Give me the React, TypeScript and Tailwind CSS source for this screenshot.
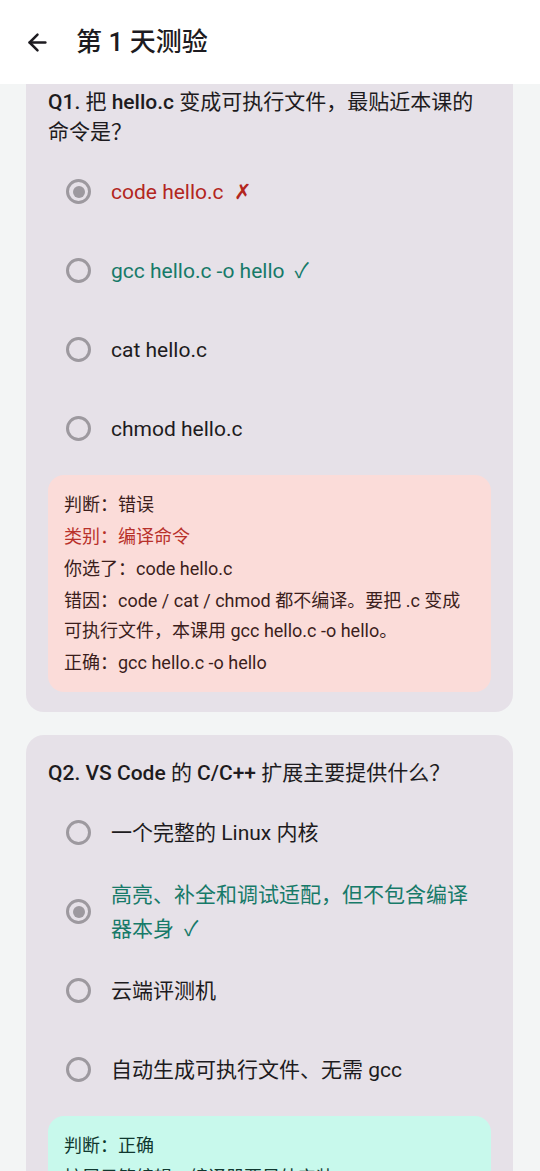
import { ArrowLeft } from 'lucide-react';

type Option = { text: string; selected?: boolean; state?: 'wrong' | 'right' };

type Question = {
  // title split into parts: latin bits are drawn medium, CJK bits regular
  title: { t: string; latin?: boolean }[];
  options: Option[];
  result: 'wrong' | 'right';
  lines: { label: string; value: string; accent?: boolean }[];
};

const questions: Question[] = [
  {
    title: [
      { t: 'Q1. ', latin: true },
      { t: '把 ' },
      { t: 'hello.c', latin: true },
      { t: ' 变成可执行文件，最贴近本课的命令是？' },
    ],
    options: [
      { text: 'code hello.c', selected: true, state: 'wrong' },
      { text: 'gcc hello.c -o hello', state: 'right' },
      { text: 'cat hello.c' },
      { text: 'chmod hello.c' },
    ],
    result: 'wrong',
    lines: [
      { label: '判断：', value: '错误' },
      { label: '类别：', value: '编译命令', accent: true },
      { label: '你选了：', value: 'code hello.c' },
      { label: '错因：', value: 'code / cat / chmod 都不编译。要把 .c 变成可执行文件，本课用 gcc hello.c -o hello。' },
      { label: '正确：', value: 'gcc hello.c -o hello' },
    ],
  },
  {
    title: [
      { t: 'Q2. VS Code ', latin: true },
      { t: '的 ' },
      { t: 'C/C++', latin: true },
      { t: ' 扩展主要提供什么？' },
    ],
    options: [
      { text: '一个完整的 Linux 内核' },
      { text: '高亮、补全和调试适配，但不包含编译器本身', selected: true, state: 'right' },
      { text: '云端评测机' },
      { text: '自动生成可执行文件、无需 gcc' },
    ],
    result: 'right',
    lines: [
      { label: '判断：', value: '正确' },
      { label: '', value: '扩展只管编辑，编译器要另外安装' },
    ],
  },
];

function Radio({ selected }: { selected?: boolean }) {
  return (
    <div className="flex h-[25px] w-[25px] shrink-0 items-center justify-center rounded-full border-[3px] border-[#9d999f]">
      {selected && <div className="h-[12px] w-[12px] rounded-full bg-[#9d999f]" />}
    </div>
  );
}

function QuestionCard({ q }: { q: Question }) {
  return (
    <div className="rounded-[18px] bg-[#e6e1e8] px-[22px] pt-[23px] pb-[20px]">
      <div className="text-[21px] leading-[30px] text-[#1d1b20]">
        {q.title.map((p, i) => (
          <span key={i} className={p.latin ? 'font-medium' : ''}>
            {p.t}
          </span>
        ))}
      </div>

      <div className="mt-[5px] flex flex-col">
        {q.options.map((o) => (
          <div key={o.text} className="flex min-h-[79px] items-center gap-[20px] pl-[18px] pr-[20px]">
            <Radio selected={o.selected} />
            <div
              className={
                'text-[21px] leading-[34px] ' +
                (o.state === 'wrong'
                  ? 'text-[#b3261e]'
                  : o.state === 'right'
                  ? 'text-[#177a69]'
                  : 'text-[#1d1b20]')
              }
            >
              {o.text}
              {o.state === 'wrong' && <span className="ml-[10px]">✗</span>}
              {o.state === 'right' && <span className="ml-[10px]">✓</span>}
            </div>
          </div>
        ))}
      </div>

      <div
        className={
          'mt-[7px] flex flex-col gap-[2px] rounded-[16px] px-[16px] pt-[15px] pb-[14px] text-[18px] leading-[30px] ' +
          (q.result === 'wrong' ? 'bg-[#fbdcd9] text-[#3b1e1c]' : 'bg-[#c8f9ec] text-[#10382f]')
        }
      >
        {q.lines.map((l, i) => (
          <div key={i} className={l.accent ? 'text-[#b8302a]' : ''}>
            {l.label}
            {l.value}
          </div>
        ))}
      </div>
    </div>
  );
}

export default function App() {
  return (
    <div
      className="h-[1171px] w-[540px] overflow-hidden bg-[#f3f5f5]"
      style={{ fontFamily: 'Roboto, "Noto Sans CJK SC", sans-serif' }}
    >
      <header className="relative z-10 flex h-[84px] items-center bg-white pl-[24px]">
        <ArrowLeft size={27} strokeWidth={2.2} className="text-[#1d1b20]" />
        <h1 className="ml-[25px] text-[26px] font-medium text-[#1d1b20]">第 1 天测验</h1>
      </header>

      <main className="-mt-[20px] flex flex-col gap-[23px] pl-[26px] pr-[27px]">
        {questions.map((q, i) => (
          <QuestionCard key={i} q={q} />
        ))}
      </main>
    </div>
  );
}
